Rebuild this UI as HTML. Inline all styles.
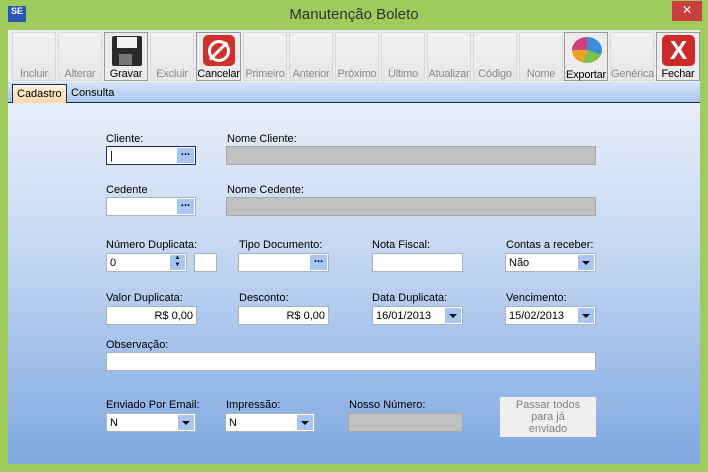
<!DOCTYPE html><html><head><style>
*{box-sizing:border-box;margin:0;padding:0}
body{width:708px;height:472px;background:#9fcb5c;font-family:"Liberation Sans",sans-serif;font-size:11px;position:relative;overflow:hidden;color:#000}
.a{position:absolute}
.title{left:0;top:6px;width:708px;text-align:center;font-size:15px;color:#333}
.close{left:672px;top:1px;width:30px;height:20px;background:#c8403e;color:#fff;text-align:center;font-size:12px;line-height:19px}
.tb{left:8px;top:30px;width:692px;height:52px;background:#eaeef3}
.btn{position:absolute;top:32px;width:44px;height:49px;background:linear-gradient(#f2f2f2,#e6e6e6);border:1px solid #d8d8d8;text-align:center;font-size:11px;color:#8a8a8a;padding-top:35px;white-space:nowrap;letter-spacing:-.2px}
.btn.on{color:#000;border-color:#999;background:#ececec}
.tabs{left:8px;top:82px;width:692px;height:21px;background:linear-gradient(#d5e4f7,#a9c7ef);border-bottom:1px solid #1a2a50}
.content{left:8px;top:103px;width:692px;height:361px;background:linear-gradient(#e8eef9,#c6d8f2 40%,#7fa8e0)}
.lbl{position:absolute;font-size:11px}
.in{position:absolute;height:19px;background:#fff;border:1px solid #a7b2c0;font-size:11px;padding:3px 3px;line-height:13px}
.gr{background:#c0c0c0;border-color:#a8a8a8}
.dd{position:absolute;right:1px;top:1px;width:16px;height:15px;background:#a8c6f3}
.dd:after{content:"";position:absolute;left:4px;top:6px;border-left:4px solid transparent;border-right:4px solid transparent;border-top:4px solid #111}
.el{position:absolute;right:1px;top:1px;width:17px;height:15px;background:#a8c6f3;font-weight:bold;text-align:center;line-height:9px;font-size:11px}
</style></head><body>
<div class="a" style="left:8px;top:6px;width:18px;height:16px;background:#2c55b8;color:#fff;font-size:9px;font-weight:bold;text-align:center;line-height:11px">SE</div>
<div class="a title">Manutenção Boleto</div>
<div class="a close">✕</div>
<div class="a tb"></div>
<div class="btn" style="left:12px">Incluir</div>
<div class="btn" style="left:58px">Alterar</div>
<div class="btn on" style="left:104px"><span class="a" style="left:7px;top:3px;width:30px;height:30px;background:#2a2a2a;border-radius:2px"></span><span class="a" style="left:12px;top:4px;width:20px;height:11px;background:#f4f4f4"></span><span class="a" style="left:14px;top:21px;width:13px;height:11px;background:#777"></span>Gravar</div>
<div class="btn" style="left:150px">Excluir</div>
<div class="btn on" style="left:196px;width:45px"><span class="a" style="left:6px;top:2px;width:32px;height:31px;background:#d0302c;border-radius:5px"></span><span class="a" style="left:11px;top:7px;width:22px;height:22px;border:3px solid #fff;border-radius:50%"></span><span class="a" style="left:20px;top:6px;width:3px;height:24px;background:#fff;transform:rotate(45deg)"></span>Cancelar</div>
<div class="btn" style="left:243px">Primeiro</div>
<div class="btn" style="left:289px">Anterior</div>
<div class="btn" style="left:335px">Próximo</div>
<div class="btn" style="left:381px">Último</div>
<div class="btn" style="left:427px">Atualizar</div>
<div class="btn" style="left:473px">Código</div>
<div class="btn" style="left:519px">Nome</div>
<div class="btn on" style="left:564px;padding-top:36px"><span class="a" style="left:7px;top:4px;width:30px;height:26px;border-radius:50%;background:conic-gradient(#3b8fd8 0 30%,#7cc24a 30% 55%,#f0a020 55% 75%,#d04080 75%)"></span>Exportar</div>
<div class="btn" style="left:610px">Genérica</div>
<div class="btn on" style="left:656px"><span class="a" style="left:5px;top:2px;width:33px;height:31px;background:#cc2a2a;border-radius:5px;color:#fff;font-size:26px;font-weight:bold;line-height:31px">X</span>Fechar</div>
<div class="a tabs"></div>
<div class="a" style="left:12px;top:84px;width:55px;height:19px;background:linear-gradient(#fff3e0,#fcd9a8);border:1px solid #1a2a50;border-bottom:none;padding:3px 0 0 4px">Cadastro</div>
<div class="a" style="left:71px;top:87px">Consulta</div>
<div class="a content"></div>

<div class="lbl" style="left:106px;top:133px">Cliente:</div>
<div class="in" style="left:106px;top:146px;width:90px;border-color:#1a2a70">|<span class="el">...</span></div>
<div class="lbl" style="left:227px;top:133px">Nome Cliente:</div>
<div class="in gr" style="left:226px;top:146px;width:370px"></div>

<div class="lbl" style="left:106px;top:184px">Cedente</div>
<div class="in" style="left:106px;top:197px;width:90px"><span class="el">...</span></div>
<div class="lbl" style="left:227px;top:184px">Nome Cedente:</div>
<div class="in gr" style="left:226px;top:197px;width:370px"></div>

<div class="lbl" style="left:106px;top:239px">Número Duplicata:</div>
<div class="in" style="left:106px;top:253px;width:81px">0<span class="a" style="right:1px;top:1px;width:15px;height:15px;background:#a8c6f3;font-size:6px;line-height:7px;text-align:center">▲<br>▼</span></div>
<div class="in" style="left:194px;top:253px;width:23px"></div>
<div class="lbl" style="left:239px;top:239px">Tipo Documento:</div>
<div class="in" style="left:238px;top:253px;width:91px"><span class="el">...</span></div>
<div class="lbl" style="left:372px;top:239px">Nota Fiscal:</div>
<div class="in" style="left:372px;top:253px;width:91px"></div>
<div class="lbl" style="left:506px;top:239px">Contas a receber:</div>
<div class="in" style="left:505px;top:253px;width:91px">Não<span class="dd"></span></div>

<div class="lbl" style="left:106px;top:292px">Valor Duplicata:</div>
<div class="in" style="left:106px;top:306px;width:91px;text-align:right">R$ 0,00</div>
<div class="lbl" style="left:239px;top:292px">Desconto:</div>
<div class="in" style="left:238px;top:306px;width:91px;text-align:right">R$ 0,00</div>
<div class="lbl" style="left:372px;top:292px">Data Duplicata:</div>
<div class="in" style="left:372px;top:306px;width:91px">16/01/2013<span class="dd"></span></div>
<div class="lbl" style="left:506px;top:292px">Vencimento:</div>
<div class="in" style="left:505px;top:306px;width:91px">15/02/2013<span class="dd"></span></div>

<div class="lbl" style="left:106px;top:339px">Observação:</div>
<div class="in" style="left:106px;top:352px;width:490px"></div>

<div class="lbl" style="left:106px;top:399px">Enviado Por Email:</div>
<div class="in" style="left:106px;top:413px;width:90px">N<span class="dd"></span></div>
<div class="lbl" style="left:226px;top:399px">Impressão:</div>
<div class="in" style="left:225px;top:413px;width:90px">N<span class="dd"></span></div>
<div class="lbl" style="left:349px;top:399px">Nosso Número:</div>
<div class="in gr" style="left:348px;top:413px;width:115px"></div>
<div class="a" style="left:500px;top:397px;width:96px;height:40px;background:#efefef;color:#808080;text-align:center;line-height:12px;padding-top:2px">Passar todos<br>para já<br>enviado</div>
</body></html>
